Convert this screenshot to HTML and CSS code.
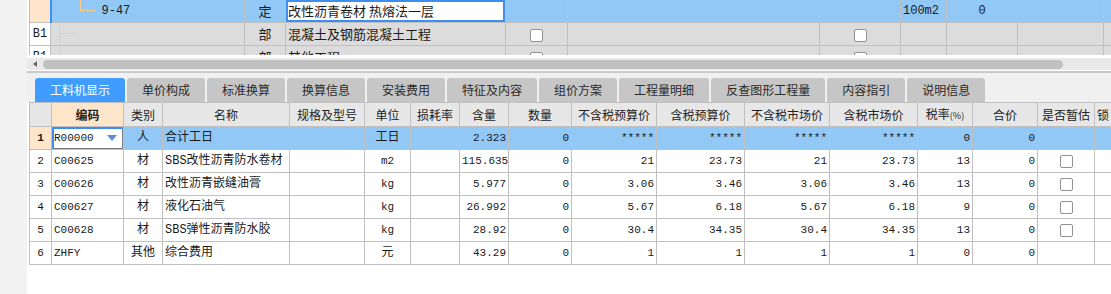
FILE: index.html
```html
<!DOCTYPE html>
<html lang="zh-CN">

<head>
    <meta charset="UTF-8">
    <title>工料机显示</title>
    <link rel="stylesheet" href="styles.css">
</head>

<body>
    <div class="gutter"></div>
    <div class="main">
        <!-- 上方：清单/定额 -->
        <div class="top-grid">
            <table class="grid grid-top">
                <colgroup>
                    <col style="width:21px"><col style="width:194px"><col style="width:41px"><col style="width:220px">
                    <col style="width:62px"><col style="width:252px"><col style="width:81px"><col style="width:46px">
                    <col style="width:71px"><col style="width:86px"><col style="width:30px">
                </colgroup>
                <tr class="sel">
                    <td class="rn peach"></td>
                    <td class="tree mark"><div class="tree-in"><span class="ln v1"></span><span class="ln h1"></span><span class="code">9-47</span></div></td>
                    <td class="c">定</td>
                    <td class="edit">改性沥青卷材 热熔法一层</td>
                    <td></td><td></td><td></td>
                    <td class="mono">100m2</td>
                    <td class="c mono">0</td>
                    <td></td><td></td>
                </tr>
                <tr class="part">
                    <td class="rn mono">B1</td>
                    <td class="tree"><div class="tree-in"><span class="ln v2"></span><span class="ln h2"></span></div></td>
                    <td class="c">部</td>
                    <td>混凝土及钢筋混凝土工程</td>
                    <td class="c"><span class="cb"></span></td>
                    <td></td>
                    <td class="c"><span class="cb"></span></td>
                    <td></td><td></td><td></td><td></td>
                </tr>
                <tr class="part">
                    <td class="rn mono">B1</td>
                    <td class="tree"><div class="tree-in"><span class="ln v2"></span></div></td>
                    <td class="c">部</td>
                    <td>其他工程</td>
                    <td class="c"><span class="cb"></span></td>
                    <td></td>
                    <td class="c"><span class="cb"></span></td>
                    <td></td><td></td><td></td><td></td>
                </tr>
            </table>
        </div>

        <div class="hscroll">
            <span class="arrow"></span>
            <div class="thumb"></div>
        </div>

        <div class="tabs">
            <div class="tab active">工料机显示</div>
            <div class="tab">单价构成</div>
            <div class="tab">标准换算</div>
            <div class="tab">换算信息</div>
            <div class="tab">安装费用</div>
            <div class="tab">特征及内容</div>
            <div class="tab">组价方案</div>
            <div class="tab">工程量明细</div>
            <div class="tab">反查图形工程量</div>
            <div class="tab">内容指引</div>
            <div class="tab">说明信息</div>
        </div>

        <!-- 下方：工料机明细 -->
        <div class="detail">
            <table class="grid grid-detail">
                <colgroup>
                    <col style="width:22px"><col style="width:72px"><col style="width:39px"><col style="width:127px">
                    <col style="width:75px"><col style="width:46px"><col style="width:49px"><col style="width:49px">
                    <col style="width:63px"><col style="width:85px"><col style="width:88px"><col style="width:85px">
                    <col style="width:88px"><col style="width:55px"><col style="width:65px"><col style="width:57px">
                    <col style="width:50px">
                </colgroup>
                <tr class="head">
                    <th></th>
                    <th class="peach"><b>编码</b></th>
                    <th>类别</th>
                    <th>名称</th>
                    <th>规格及型号</th>
                    <th>单位</th>
                    <th>损耗率</th>
                    <th>含量</th>
                    <th>数量</th>
                    <th>不含税预算价</th>
                    <th>含税预算价</th>
                    <th>不含税市场价</th>
                    <th>含税市场价</th>
                    <th>税率<small>(%)</small></th>
                    <th>合价</th>
                    <th>是否暂估</th>
                    <th class="l">锁</th>
                </tr>
                <tr class="sel">
                    <td class="rn peach"><b>1</b></td>
                    <td class="edit-code"><div class="dd"><span>R00000</span><span class="caret"></span></div></td>
                    <td class="c t">人</td>
                    <td class="t">合计工日</td>
                    <td></td>
                    <td class="c t">工日</td>
                    <td></td>
                    <td class="r">2.323</td>
                    <td class="r">0</td>
                    <td class="r">*****</td>
                    <td class="r">*****</td>
                    <td class="r">*****</td>
                    <td class="r">*****</td>
                    <td class="r">0</td>
                    <td class="r">0</td>
                    <td></td>
                    <td></td>
                </tr>
                <tr>
                    <td class="rn">2</td>
                    <td>C00625</td>
                    <td class="c t">材</td>
                    <td class="t">SBS改性沥青防水卷材</td>
                    <td></td>
                    <td class="c">m2</td>
                    <td></td>
                    <td class="r">115.635</td>
                    <td class="r">0</td>
                    <td class="r">21</td>
                    <td class="r">23.73</td>
                    <td class="r">21</td>
                    <td class="r">23.73</td>
                    <td class="r">13</td>
                    <td class="r">0</td>
                    <td class="c"><span class="cb"></span></td>
                    <td></td>
                </tr>
                <tr>
                    <td class="rn">3</td>
                    <td>C00626</td>
                    <td class="c t">材</td>
                    <td class="t">改性沥青嵌缝油膏</td>
                    <td></td>
                    <td class="c">kg</td>
                    <td></td>
                    <td class="r">5.977</td>
                    <td class="r">0</td>
                    <td class="r">3.06</td>
                    <td class="r">3.46</td>
                    <td class="r">3.06</td>
                    <td class="r">3.46</td>
                    <td class="r">13</td>
                    <td class="r">0</td>
                    <td class="c"><span class="cb"></span></td>
                    <td></td>
                </tr>
                <tr>
                    <td class="rn">4</td>
                    <td>C00627</td>
                    <td class="c t">材</td>
                    <td class="t">液化石油气</td>
                    <td></td>
                    <td class="c">kg</td>
                    <td></td>
                    <td class="r">26.992</td>
                    <td class="r">0</td>
                    <td class="r">5.67</td>
                    <td class="r">6.18</td>
                    <td class="r">5.67</td>
                    <td class="r">6.18</td>
                    <td class="r">9</td>
                    <td class="r">0</td>
                    <td class="c"><span class="cb"></span></td>
                    <td></td>
                </tr>
                <tr>
                    <td class="rn">5</td>
                    <td>C00628</td>
                    <td class="c t">材</td>
                    <td class="t">SBS弹性沥青防水胶</td>
                    <td></td>
                    <td class="c">kg</td>
                    <td></td>
                    <td class="r">28.92</td>
                    <td class="r">0</td>
                    <td class="r">30.4</td>
                    <td class="r">34.35</td>
                    <td class="r">30.4</td>
                    <td class="r">34.35</td>
                    <td class="r">13</td>
                    <td class="r">0</td>
                    <td class="c"><span class="cb"></span></td>
                    <td></td>
                </tr>
                <tr>
                    <td class="rn">6</td>
                    <td>ZHFY</td>
                    <td class="c t">其他</td>
                    <td class="t">综合费用</td>
                    <td></td>
                    <td class="c t">元</td>
                    <td></td>
                    <td class="r">43.29</td>
                    <td class="r">0</td>
                    <td class="r">1</td>
                    <td class="r">1</td>
                    <td class="r">1</td>
                    <td class="r">1</td>
                    <td class="r">0</td>
                    <td class="r">0</td>
                    <td></td>
                    <td></td>
                </tr>
            </table>
        </div>
    </div>
</body>

</html>
```

FILE: styles.css
```css
html,
body {
    margin: 0;
    height: 294px;
    overflow: hidden;
}

body {
    display: flex;
    background: #fff;
    color: #1a1a1a;
    font-family: "Liberation Mono", "Noto Sans CJK SC", monospace;
    font-size: 12px;
}

.gutter {
    width: 27px;
    flex: none;
    background: #f2f2f2;
}

.main {
    flex: 1;
    min-width: 0;
    overflow: hidden;
    display: flex;
    flex-direction: column;
}

/* 表格通用 */
.grid {
    border-collapse: collapse;
    table-layout: fixed;
    margin-left: 2px;
}

.grid td,
.grid th {
    border: 1px solid #c0c0c0;
    padding: 0 2px;
    white-space: nowrap;
    overflow: hidden;
    line-height: 20px;
    font-weight: normal;
}

.grid tr {
    height: 23px;
}

.c {
    text-align: center;
}

.r {
    text-align: right;
}

.l {
    text-align: left;
}

.peach {
    background: #ffe6ca;
}

.cb {
    display: inline-block;
    width: 11px;
    height: 11px;
    border: 1px solid #929292;
    border-radius: 2px;
    background: #fff;
    vertical-align: middle;
}

/* 上方表格 */
.top-grid {
    height: 55px;
    overflow: hidden;
    flex: none;
}

.grid-top {
    width: 1104px;
    margin-top: -1px;
    font-family: "Noto Sans CJK SC", sans-serif;
    font-size: 13px;
}

.grid-top .mono,
.grid-top .code {
    font-family: "Liberation Mono", monospace;
    font-size: 12px;
}

.grid-top tr.part td {
    background: #dcdcdc;
}

.grid-top tr.part td.rn {
    background: #fff;
    text-align: center;
}

.grid-top tr.sel td {
    background: #92c8f6;
}

.grid-top tr.sel td.rn {
    background: #ffe6ca;
}

.grid-top td.mark {
    border-left: 2px solid #3c8ef0;
}

.grid-top tr.sel td.edit {
    background: #fff;
    box-shadow: inset 0 0 0 2px #3c8ef0;
}

.grid-top td.tree {
    padding: 0;
}

.tree-in {
    position: relative;
    height: 22px;
}

.tree-in .code {
    position: absolute;
    left: 50px;
    top: 1px;
    line-height: 20px;
}

.ln {
    position: absolute;
    background: #ffc98a;
}

.v1 {
    left: 28px;
    top: -1px;
    width: 1px;
    height: 11px;
}

.h1 {
    left: 28px;
    top: 10px;
    width: 16px;
    height: 1px;
}

.v2 {
    left: 8px;
    top: -1px;
    width: 1px;
    height: 24px;
}

.h2 {
    left: 8px;
    top: 10px;
    width: 16px;
    height: 1px;
}

/* 横向滚动条 */
.hscroll {
    flex: none;
    height: 12px;
    margin-top: 3px;
    background: #e9e9e9;
    display: flex;
    align-items: center;
    padding-left: 6px;
}

.arrow {
    width: 0;
    height: 0;
    border-top: 3px solid transparent;
    border-bottom: 3px solid transparent;
    border-right: 4px solid #666;
}

.thumb {
    margin-left: 6px;
    width: 1020px;
    height: 9px;
    border-radius: 5px;
    background: #c0c0c0;
}

/* 页签 */
.tabs {
    flex: none;
    margin-top: 1px;
    border-top: 2px solid #c9c9c9;
    background: #f0f0f0;
    padding: 5px 0 0 8px;
    display: flex;
    gap: 2px;
    font-family: "Noto Sans CJK SC", sans-serif;
    font-size: 12px;
}

.tab {
    height: 24px;
    line-height: 24px;
    padding: 0 15px;
    background: #c6c6c6;
    color: #2a2a2a;
    border-radius: 3px 3px 0 0;
}

.tab.active {
    background: #409dff;
    color: #fff;
}

/* 下方表格 */
.grid-detail {
    width: 1115px;
}

.grid-detail td {
    font-size: 11px;
}

.grid-detail td.t {
    font-size: 12px;
}

.grid-detail th {
    background: #e7e7e7;
    font-family: "Noto Sans CJK SC", sans-serif;
    color: #222;
}

.grid-detail th.peach {
    background: #ffe6ca;
}

.grid-detail tr.head {
    height: 24px;
}

.grid-detail th small {
    font-size: 9px;
}

.grid-detail td.rn {
    text-align: center;
}

.grid-detail tr.sel td {
    background: #92c8f6;
}

.grid-detail tr.sel td.rn {
    background: #ffe6ca;
}

.grid-detail tr.sel td.edit-code {
    background: #fff;
    box-shadow: inset 2px 2px 0 #3c8ef0, inset -1px -1px 0 #7a7a7a;
}

.dd {
    display: flex;
    justify-content: space-between;
    align-items: center;
    padding-right: 4px;
}

.caret {
    width: 0;
    height: 0;
    border-left: 5px solid transparent;
    border-right: 5px solid transparent;
    border-top: 6px solid #5b8fce;
}
```
